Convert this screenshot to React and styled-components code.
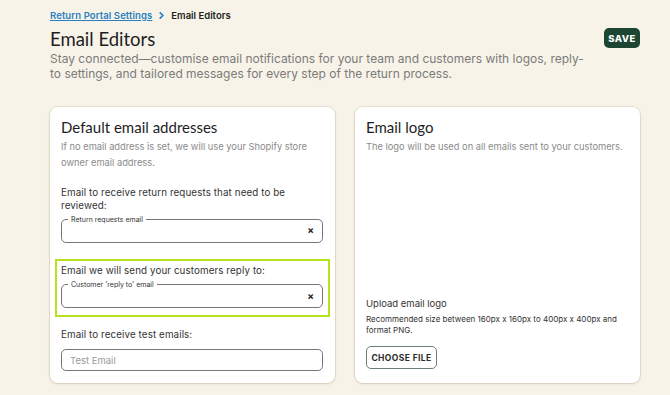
import styled, { createGlobalStyle } from 'styled-components';

const GlobalStyle = createGlobalStyle`
  body {
    margin: 0;
    background: #f7f3e8;
    font-family: Inter, 'Noto Sans', sans-serif;
  }
`;

const Page = styled.div`
  width: 670px;
  height: 395px;
  box-sizing: border-box;
  padding: 9px 30px 0 50px;
  overflow: hidden;
`;

const Breadcrumb = styled.div`
  display: flex;
  align-items: center;
  gap: 5px;
  font-size: 9.5px;
  font-weight: 600;
  height: 13px;
`;

const CrumbLink = styled.a`
  color: #2a7fc0;
  text-decoration: underline;
  letter-spacing: 0.1px;
`;

const Current = styled.span`
  color: #222;
`;

const Header = styled.div`
  display: flex;
  justify-content: space-between;
  align-items: flex-start;
`;

const TitleBlock = styled.div`
  width: 535px;
`;

const Title = styled.h1`
  margin: 5px 0 0;
  font-family: Lato, sans-serif;
  font-weight: 400;
  font-size: 18.5px;
  line-height: 24px;
  color: #1e1e1e;
`;

const Description = styled.p`
  margin: 0;
  font-size: 12px;
  line-height: 15px;
  color: #7b7b7b;
`;

const SaveButton = styled.button`
  margin-top: 6px;
  background: #1c4532;
  color: #fff;
  border: none;
  border-radius: 5px;
  font-family: Inter, sans-serif;
  font-weight: 800;
  font-size: 9.5px;
  letter-spacing: 0.5px;
  width: 36px;
  height: 20px;
  padding: 0;
`;

const Grid = styled.div`
  display: grid;
  grid-template-columns: 285px 285px;
  gap: 20px;
  margin-top: 26px;
`;

const Card = styled.section`
  background: #fff;
  border-radius: 8px;
  box-shadow: 0 1px 3px rgba(120, 100, 60, 0.18), 0 0 0 1px rgba(220, 210, 190, 0.5);
  height: 276px;
  box-sizing: border-box;
  padding: 10px 12px ${(p) => p.$bottom || 12}px 11px;
  display: flex;
  flex-direction: column;
  & > * {
    flex-shrink: 0;
  }
`;

const CardTitle = styled.h2`
  margin: 0;
  font-family: Lato, sans-serif;
  font-weight: 400;
  font-size: 15px;
  line-height: 20px;
  color: #1e1e1e;
`;

const Hint = styled.p`
  margin: 2px 0 0;
  font-size: 9.3px;
  line-height: 16px;
  color: #8a8a8a;
`;

const FieldLabel = styled.div`
  font-size: 9.8px;
  line-height: 13px;
  color: #333;
  letter-spacing: 0.1px;
  margin-top: ${(p) => p.$top || 0}px;
`;

const Outline = styled.fieldset`
  margin: 3px 0 0;
  padding: 0 8px 4px;
  border: 1px solid #777;
  border-radius: 5px;
  height: 28px;
  box-sizing: border-box;
  display: flex;
  align-items: center;
`;

const PlainBox = styled.div`
  margin-top: 8px;
  padding: 0 8px;
  border: 1px solid #777;
  border-radius: 5px;
  height: 22px;
  box-sizing: border-box;
  display: flex;
  align-items: center;
`;

const Legend = styled.legend`
  font-size: 7px;
  color: #333;
  padding: 0 3px;
  margin-left: -2px;
  line-height: 9px;
`;

const Input = styled.input`
  flex: 1;
  min-width: 0;
  border: none;
  outline: none;
  background: transparent;
  font-family: Inter, sans-serif;
  font-size: 9.5px;
  color: #333;
  padding: 0;
  &::placeholder {
    color: #999;
  }
`;

const Clear = styled.span`
  font-size: 10px;
  font-weight: 700;
  color: #222;
  line-height: 1;
`;

const Highlight = styled.div`
  margin: 16px -7px 0 -6px;
  padding: 1px 5px 7px 4px;
  border: 2px solid #b7e21f;
`;

const Spacer = styled.div`
  flex: 1;
`;

const UploadTitle = styled.div`
  font-size: 9.5px;
  line-height: 14px;
  color: #333;
`;

const UploadHint = styled.p`
  margin: 3px 0 0;
  font-size: 8px;
  line-height: 11px;
  color: #333;
`;

const ChooseButton = styled.button`
  margin-top: 10px;
  align-self: flex-start;
  width: 71px;
  height: 23px;
  padding: 0;
  background: #fff;
  border: 1px solid #6b7f75;
  border-radius: 5px;
  font-family: Inter, sans-serif;
  font-size: 8.5px;
  font-weight: 700;
  letter-spacing: 0.4px;
  color: #2b2b2b;
`;

function Chevron() {
  return (
    <svg width="9" height="9" viewBox="0 0 10 10">
      <path d="M3 1.5 L6.5 5 L3 8.5" fill="none" stroke="#2a7fc0" strokeWidth="1.8" />
    </svg>
  );
}

function NotchedField({ legend }) {
  return (
    <Outline>
      <Legend>{legend}</Legend>
      <Input />
      <Clear>×</Clear>
    </Outline>
  );
}

export default function App() {
  return (
    <>
      <GlobalStyle />
      <Page>
        <Breadcrumb>
          <CrumbLink>Return Portal Settings</CrumbLink>
          <Chevron />
          <Current>Email Editors</Current>
        </Breadcrumb>
        <Header>
          <TitleBlock>
            <Title>Email Editors</Title>
            <Description>
              Stay connected—customise email notifications for your team and customers with logos, reply-to settings, and tailored messages for every step of the return process.
            </Description>
          </TitleBlock>
          <SaveButton>SAVE</SaveButton>
        </Header>
        <Grid>
          <Card>
            <CardTitle>Default email addresses</CardTitle>
            <Hint>If no email address is set, we will use your Shopify store owner email address.</Hint>
            <FieldLabel $top={15}>Email to receive return requests that need to be reviewed:</FieldLabel>
            <NotchedField legend="Return requests email" />
            <Highlight>
              <FieldLabel $top={2}>Email we will send your customers reply to:</FieldLabel>
              <NotchedField legend="Customer 'reply to' email" />
            </Highlight>
            <FieldLabel $top={11}>Email to receive test emails:</FieldLabel>
            <PlainBox>
              <Input placeholder="Test Email" />
            </PlainBox>
          </Card>
          <Card $bottom={14}>
            <CardTitle>Email logo</CardTitle>
            <Hint>The logo will be used on all emails sent to your customers.</Hint>
            <Spacer />
            <UploadTitle>Upload email logo</UploadTitle>
            <UploadHint>Recommended size between 160px x 160px to 400px x 400px and format PNG.</UploadHint>
            <ChooseButton>CHOOSE FILE</ChooseButton>
          </Card>
        </Grid>
      </Page>
    </>
  );
}
